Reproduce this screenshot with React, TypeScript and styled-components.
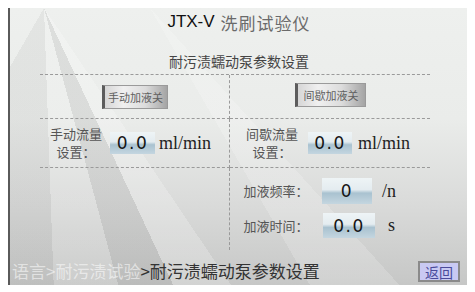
import styled, { createGlobalStyle } from "styled-components";

const GlobalStyle = createGlobalStyle`
  body {
    margin: 8px;
    background: #ffffff;
    font-family: "Noto Sans CJK SC", sans-serif;
  }
`;

/* the hmi screen with its faceted grey backdrop */
const Screen = styled.div`
  width: 458px;
  height: 277px;
  border-left: 2px solid #5a5a5a;
  border-right: 2px solid #5a5a5a;
  display: flex;
  flex-direction: column;
  background:
    conic-gradient(from 0deg at 34px 0px,
      transparent 0deg 146deg,
      rgba(255,255,255,0.22) 146deg 155deg,
      rgba(120,120,120,0.14) 155deg 165deg,
      rgba(255,255,255,0.1) 165deg 178deg,
      rgba(100,100,100,0.08) 178deg 210deg,
      transparent 210deg),
    conic-gradient(from 0deg at 140px 0px,
      transparent 0deg 138deg,
      rgba(255,255,255,0.18) 138deg 150deg,
      transparent 150deg),
    linear-gradient(180deg, #eef0ee 0%, #eaecea 40%, #dadbda 70%, #c6c7c6 100%);
`;

const Title = styled.div`
  height: 26px;
  display: flex;
  justify-content: center;
  align-items: center;
  gap: 6px;
  padding-top: 1px;
  font-size: 17px;
`;

const TitleCode = styled.span`
  font-family: "Liberation Sans", Arial, sans-serif;
  color: #111;
`;

const TitleName = styled.span`
  color: #6a6a6a;
  letter-spacing: 1px;
`;

const SubTitle = styled.div`
  height: 39px;
  display: flex;
  justify-content: center;
  align-items: flex-end;
  padding-bottom: 3px;
  box-sizing: border-box;
  font-size: 14px;
  color: #444;
`;

const Panel = styled.div`
  margin-left: 30px;
  width: 390px;
  height: 175px;
  display: grid;
  grid-template-columns: 190px 200px;
  grid-template-rows: 44px 49px 1fr;
  border-top: 1px dashed #9a9a9a;
`;

const Cell = styled.div<{ $left?: boolean; $line?: boolean; $pad?: number }>`
  display: flex;
  align-items: center;
  justify-content: ${(p) => (p.$pad === undefined ? "center" : "flex-start")};
  padding-left: ${(p) => p.$pad ?? 0}px;
  border-right: ${(p) => (p.$left ? "1px dashed #9a9a9a" : "none")};
  border-bottom: ${(p) => (p.$line ? "1px dashed #9a9a9a" : "none")};
`;

const ToggleButton = styled.div<{ $w: number; $dy?: number }>`
  width: ${(p) => p.$w}px;
  height: 24px;
  margin-top: ${(p) => p.$dy ?? 0}px;
  box-sizing: border-box;
  border: 1px solid #9a9a9a;
  border-left: 3px solid #5c5c5c;
  background: linear-gradient(90deg, #d6d6d6 0%, #f0f0f0 30%, #dcdcdc 65%, #a4a4a4 100%);
  display: flex;
  align-items: center;
  justify-content: center;
  font-size: 11px;
  color: #606060;
`;

const Label = styled.div<{ $w?: number }>`
  font-size: 13px;
  line-height: 18px;
  color: #555;
  text-align: center;
  width: ${(p) => (p.$w ? `${p.$w}px` : "auto")};
`;

const ValueBox = styled.div<{ $w: number; $h: number; $ml: number }>`
  width: ${(p) => p.$w}px;
  height: ${(p) => p.$h}px;
  margin-left: ${(p) => p.$ml}px;
  box-sizing: border-box;
  background: linear-gradient(180deg, #eef4f6 0%, #e4ecf0 45%, #a9c2d0 58%, #c4d6e0 100%);
  display: flex;
  align-items: center;
  justify-content: center;
  font-family: "DejaVu Sans", sans-serif;
  font-size: 17px;
  letter-spacing: 1.5px;
  color: #151515;
`;

const Unit = styled.div<{ $ml: number }>`
  margin-left: ${(p) => p.$ml}px;
  font-family: "Liberation Serif", serif;
  font-size: 18px;
  color: #222;
`;

const DosingCell = styled.div`
  grid-column: 2;
  display: flex;
  flex-direction: column;
  gap: 9px;
  padding: 10px 0 0 13px;
`;

const DosingRow = styled.div`
  display: flex;
  align-items: center;
`;

const Footer = styled.div`
  flex: 1;
  display: flex;
  align-items: flex-end;
  justify-content: space-between;
  padding: 0 8px 2px 2px;
`;

const Breadcrumb = styled.div`
  font-size: 17px;
  line-height: 24px;
  color: #333;
`;

const Faded = styled.span`
  color: rgba(255, 255, 255, 0.55);
`;

const BackButton = styled.div`
  width: 42px;
  height: 21px;
  box-sizing: border-box;
  margin-bottom: 1px;
  border: 2px solid #8a8a8a;
  background: #c9c9f3;
  display: flex;
  align-items: center;
  justify-content: center;
  font-size: 14px;
  color: #4a4a9a;
`;

export default function App() {
  return (
    <>
      <GlobalStyle />
      <Screen>
        <Title>
          <TitleCode>JTX-V</TitleCode>
          <TitleName>洗刷试验仪</TitleName>
        </Title>
        <SubTitle>耐污渍蠕动泵参数设置</SubTitle>
        <Panel>
          <Cell $left $line>
            <ToggleButton $w={66} $dy={1}>手动加液关</ToggleButton>
          </Cell>
          <Cell $line>
            <ToggleButton $w={71} $dy={-3}>间歇加液关</ToggleButton>
          </Cell>
          <Cell $left $line $pad={10}>
            <Label>手动流量<br />设置：</Label>
            <ValueBox $w={45} $h={22} $ml={8}>0.0</ValueBox>
            <Unit $ml={4}>ml/min</Unit>
          </Cell>
          <Cell $line $pad={16}>
            <Label>间歇流量<br />设置：</Label>
            <ValueBox $w={44} $h={22} $ml={10}>0.0</ValueBox>
            <Unit $ml={6}>ml/min</Unit>
          </Cell>
          <Cell $left />
          <DosingCell>
            <DosingRow>
              <Label $w={66}>加液频率：</Label>
              <ValueBox $w={50} $h={26} $ml={13}>0</ValueBox>
              <Unit $ml={10}>/n</Unit>
            </DosingRow>
            <DosingRow>
              <Label $w={66}>加液时间：</Label>
              <ValueBox $w={52} $h={25} $ml={14}>0.0</ValueBox>
              <Unit $ml={13}>s</Unit>
            </DosingRow>
          </DosingCell>
        </Panel>
        <Footer>
          <Breadcrumb>
            <Faded>语言&gt;耐污渍试验</Faded>&gt;耐污渍蠕动泵参数设置
          </Breadcrumb>
          <BackButton>返回</BackButton>
        </Footer>
      </Screen>
    </>
  );
}
